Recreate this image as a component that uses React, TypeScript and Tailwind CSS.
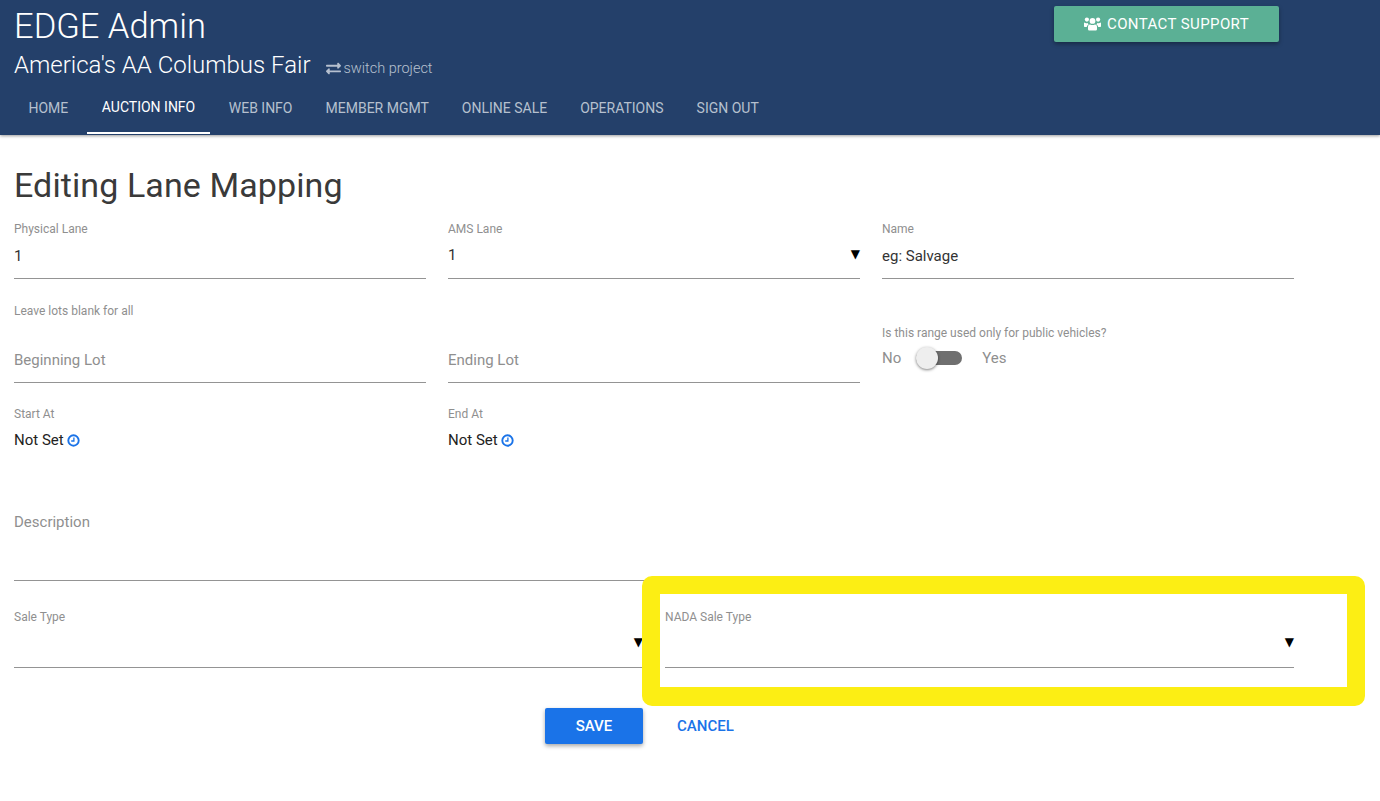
import { FaExchangeAlt } from "react-icons/fa";

const navItems = ["Home", "Auction Info", "Web Info", "Member Mgmt", "Online Sale", "Operations", "Sign Out"];

function UsersIcon() {
  return (
    <svg width="17" height="14" viewBox="0 0 17 14" fill="currentColor">
      <circle cx="8.5" cy="3.9" r="2.9" />
      <circle cx="2.9" cy="2.6" r="2.1" />
      <circle cx="14.1" cy="2.6" r="2.1" />
      <path d="M6 7.4c1.4.9 3.6.9 5 0 1.4 0 2 1 2 2.3v2.2c0 1-.7 1.6-1.6 1.6H5.6c-.9 0-1.6-.6-1.6-1.6V9.7c0-1.3.6-2.3 2-2.3z" />
      <path d="M.3 5.6c.9.5 2.2.8 3.4.3.3.9.7 1.3 1 1.5-1.2.5-1.8 1.4-1.9 2.7H1c-.6 0-1-.4-1-1V6.3c0-.3.1-.5.3-.7z" />
      <path d="M16.7 5.6c-.9.5-2.2.8-3.4.3-.3.9-.7 1.3-1 1.5 1.2.5 1.8 1.4 1.9 2.7H16c.6 0 1-.4 1-1V6.3c0-.3-.1-.5-.3-.7z" />
    </svg>
  );
}

function ClockIcon() {
  return (
    <svg width="13" height="13" viewBox="0 0 13 13" fill="none" stroke="#1a73e8">
      <circle cx="6.5" cy="6.5" r="5.2" strokeWidth="1.9" />
      <path d="M6.9 3.5v3.5H4.2" strokeWidth="1.3" />
    </svg>
  );
}

function Field({ label, value, arrow, h = "h-[57px]" }: { label: string; value?: string; arrow?: boolean; h?: string }) {
  return (
    <div className={`${h} flex flex-col border-b border-[#949494]`}>
      <div className="text-xs leading-[14px] h-[14px] text-[#8f8f8f]">{label}</div>
      <div
        className={
          arrow
            ? "flex-1 flex items-center justify-between pb-[3px] text-[15px] text-[#333333]"
            : "flex-1 flex items-center justify-between pb-[1px] text-[15px] text-[#333333]"
        }
      >
        <span>{value}</span>
        {arrow && <span className="text-[12px] text-black font-['DejaVu_Sans'] pb-[4px]">▼</span>}
      </div>
    </div>
  );
}

function Placeholder({ text, h }: { text: string; h: string }) {
  return <div className={`${h} border-b border-[#949494] text-[15px] text-[#8f8f8f]`}>{text}</div>;
}

function DateField({ label }: { label: string }) {
  return (
    <div>
      <div className="text-xs leading-[14px] text-[#8f8f8f]">{label}</div>
      <div className="mt-[9px] flex items-center gap-[3px] text-[15px] leading-[20px] text-[#222222]">
        Not Set <ClockIcon />
      </div>
    </div>
  );
}

export default function App() {
  return (
    <div className="relative h-[801px] w-[1380px] overflow-hidden bg-white font-['Roboto',sans-serif]">
      <header className="h-[135px] bg-[#24406a] shadow-[0_1px_3px_rgba(0,0,0,0.4)] px-[14px] relative">
        <div className="flex justify-between pr-[87px]">
          <div>
            <h1 className="text-[34.5px] leading-[42px] mt-[5px] font-light text-white">EDGE Admin</h1>
            <div className="flex items-center mt-[4px] h-[28px]">
              <span className="text-2xl font-light text-white">America's AA Columbus Fair</span>
              <span className="ml-[16px] mt-[7px] flex items-center gap-[2px] text-[14.5px] text-[#b6c0cf] font-light">
                <FaExchangeAlt className="text-[15px]" /> switch project
              </span>
            </div>
          </div>
          <button className="mt-[6px] h-[36px] w-[225px] rounded-[2px] bg-[#5bb095] text-white text-[15px] tracking-[0.4px] flex items-center justify-center gap-[6px] shadow-[0_2px_4px_rgba(0,0,0,0.35)]">
            <UsersIcon /> CONTACT SUPPORT
          </button>
        </div>
        <nav className="flex mt-[3px] h-[52px] ml-[-2px]">
          {navItems.map((item) => (
            <div
              key={item}
              className={
                item === "Auction Info"
                  ? "h-[52px] px-[15px] mx-[2px] border-b-2 border-white flex items-center uppercase text-sm font-normal text-white"
                  : "h-[52px] px-[15px] mx-[1.5px] flex items-center uppercase text-sm font-normal text-[#b6c0cf]"
              }
            >
              {item}
            </div>
          ))}
        </nav>
      </header>

      <main className="w-[1294px] pl-[14px]">
        <h2 className="mt-[29px] text-[34px] leading-[42px] font-normal tracking-[0.1px] text-[#3a3a3a]">Editing Lane Mapping</h2>

        <div className="mt-[16px] grid grid-cols-3 gap-x-[22px]">
          <Field label="Physical Lane" value="1" />
          <Field label="AMS Lane" value="1" arrow />
          <Field label="Name" value="eg: Salvage" />
        </div>

        <div className="mt-[25px] text-xs leading-[14px] text-[#8f8f8f]">Leave lots blank for all</div>

        <div className="grid grid-cols-3 gap-x-[22px]">
          <div className="mt-[27px]">
            <Placeholder text="Beginning Lot" h="h-[38px] leading-[30px]" />
          </div>
          <div className="mt-[27px]">
            <Placeholder text="Ending Lot" h="h-[38px] leading-[30px]" />
          </div>
          <div className="mt-[8px]">
            <div className="text-xs leading-[14px] text-[#8f8f8f]">Is this range used only for public vehicles?</div>
            <div className="mt-[7px] flex items-center text-[15px] text-[#8f8f8f]">
              <span>No</span>
              <span className="relative ml-[15px] h-[14px] w-[46px] rounded-full bg-[#6f6f6f]">
                <span className="absolute left-0 top-[-4px] h-[22px] w-[22px] rounded-full bg-[#eeeeee] shadow-[0_1px_3px_rgba(0,0,0,0.5)]" />
              </span>
              <span className="ml-[20px]">Yes</span>
            </div>
          </div>
        </div>

        <div className="mt-[24px] grid grid-cols-3 gap-x-[22px]">
          <DateField label="Start At" />
          <DateField label="End At" />
        </div>

        <div className="mt-[57px]">
          <Placeholder text="Description" h="h-[74px] leading-[30px]" />
        </div>

        <div className="mt-[29px] grid grid-cols-2 gap-x-[22px]">
          <Field label="Sale Type" arrow h="h-[58px]" />
          <Field label="NADA Sale Type" arrow h="h-[58px]" />
        </div>

        <div className="mt-[40px] flex items-center pl-[531px]">
          <button className="h-[36px] w-[98px] rounded-[2px] bg-[#1a73e8] text-white text-[15px] font-medium shadow-[0_2px_4px_rgba(0,0,0,0.35)]">
            SAVE
          </button>
          <button className="ml-[34px] h-[36px] text-[15px] font-medium text-[#1a73e8]">CANCEL</button>
        </div>
      </main>

      {/* yellow annotation box drawn over the form */}
      <div className="absolute left-[642px] top-[576px] h-[130px] w-[723px] rounded-[10px] border-[18px] border-b-[19px] border-[#fcee14]" />
    </div>
  );
}
